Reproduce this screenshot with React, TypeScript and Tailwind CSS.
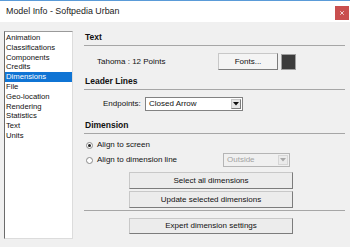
import { X } from "lucide-react"

const pages = [
  "Animation",
  "Classifications",
  "Components",
  "Credits",
  "Dimensions",
  "File",
  "Geo-location",
  "Rendering",
  "Statistics",
  "Text",
  "Units",
]

function SectionHeader({ title, className = "" }: { title: string; className?: string }) {
  return (
    <>
      <div className={`h-[12px] flex items-center pl-[1px] text-[8.5px] font-bold text-[#111] ${className}`}>
        {title}
      </div>
      <div className="mt-[2px] h-px bg-[#a6a6a6]" />
    </>
  )
}

function Button({ label, className = "" }: { label: string; className?: string }) {
  return (
    <div
      className={`flex items-center justify-center bg-[#ececec] border border-[#c8c8c8]
        border-r-[#7c7c7c] border-b-[#7c7c7c] text-[8px] text-[#111] ${className}`}
    >
      {label}
    </div>
  )
}

function Select({ value, disabled = false, className = "" }: { value: string; disabled?: boolean; className?: string }) {
  return (
    <div
      className={`flex items-stretch border p-[1px] ${
        disabled ? "border-[#b5b5b5] bg-[#f0f0f0]" : "border-[#828282] bg-white"
      } ${className}`}
    >
      <span className={`flex-1 flex items-center pl-[2px] text-[8px] ${disabled ? "text-[#a3a3a3]" : "text-[#111]"}`}>
        {value}
      </span>
      <span
        className={`w-[10px] flex items-center justify-center border ${
          disabled ? "border-[#d6d6d6] bg-[#ebebeb]" : "border-[#c8c8c8] border-r-[#7c7c7c] border-b-[#7c7c7c] bg-[#e6e6e6]"
        }`}
      >
        <svg width="6" height="4" viewBox="0 0 6 4">
          <path d="M0 0h6L3 3.5z" fill={disabled ? "#a8a8a8" : "#111"} />
        </svg>
      </span>
    </div>
  )
}

function Radio({ checked, label }: { checked: boolean; label: string }) {
  return (
    <div className="flex items-center pl-[2px]">
      <span className="w-[7px] h-[7px] rounded-full border border-[#8a8a8a] bg-white flex items-center justify-center">
        {checked && <span className="w-[3px] h-[3px] rounded-full bg-[#222]" />}
      </span>
      <span className="ml-[4px] text-[8px] text-[#111]">{label}</span>
    </div>
  )
}

export default function App() {
  return (
    <div
      className="w-[350px] h-[247px] flex flex-col bg-[#f0f0f0] overflow-hidden"
      style={{ fontFamily: '"Liberation Sans", Arial, sans-serif' }}
    >
      {/* Title bar */}
      <div className="h-[22px] flex items-center justify-between bg-white border-t border-[#5a9bd8] pl-[6px] pr-[1px]">
        <span className="text-[8.9px] text-[#1a1a1a]">Model Info - Softpedia Urban</span>
        <span className="w-[14px] h-[14px] mt-[5px] self-start flex items-center justify-center bg-[#c94f4f]">
          <X size={6} strokeWidth={3} className="text-white" />
        </span>
      </div>

      <div className="flex-1 flex pl-[4px] pr-[5px] pt-[9px]">
        {/* Page list */}
        <div className="w-[69px] h-[208px] bg-white border border-[#dcdcdc] border-l-[#6b6b6b] border-t-[#9a9a9a] pt-[1px]">
          {pages.map((p) => (
            <div
              key={p}
              className={`h-[9.8px] flex items-center pl-[1px] text-[7.7px] leading-none ${
                p === "Dimensions" ? "bg-[#0f74d4] text-white" : "text-[#111]"
              }`}
            >
              {p}
            </div>
          ))}
        </div>

        {/* Settings */}
        <div className="flex-1 ml-[11px] flex flex-col">
          <SectionHeader title="Text" />
          <div className="mt-[7px] h-[17px] flex items-center">
            <span className="ml-[13px] text-[8px] text-[#111]">Tahoma : 12 Points</span>
            <Button label="Fonts..." className="ml-auto w-[60px] h-[17px] bg-[#f4f4f4]" />
            <div className="ml-[3px] mr-[49px] w-[15px] h-[16px] border border-[#a0a0a0] bg-[#3c3c3c]" />
          </div>

          <SectionHeader title="Leader Lines" className="mt-[5px]" />
          <div className="mt-[7px] h-[14px] flex items-center">
            <span className="ml-[19px] w-[40px] text-[8px] text-[#111]">Endpoints:</span>
            <Select value="Closed Arrow" className="ml-[2px] w-[98px] h-[14px]" />
          </div>

          <SectionHeader title="Dimension" className="mt-[8px]" />
          <div className="mt-[5px] h-[12px] flex items-center">
            <Radio checked label="Align to screen" />
          </div>
          <div className="mt-[2px] h-[14px] flex items-center">
            <Radio checked={false} label="Align to dimension line" />
            <Select value="Outside" disabled className="ml-auto mr-[55px] w-[67px] h-[14px]" />
          </div>

          <Button label="Select all dimensions" className="mt-[5px] ml-[45px] w-[164px] h-[17px]" />
          <Button label="Update selected dimensions" className="mt-[2px] ml-[45px] w-[164px] h-[17px]" />
          <div className="mt-[2px] h-px bg-[#a6a6a6]" />
          <Button label="Expert dimension settings" className="mt-[7px] ml-[45px] w-[164px] h-[16px]" />
        </div>
      </div>
    </div>
  )
}
